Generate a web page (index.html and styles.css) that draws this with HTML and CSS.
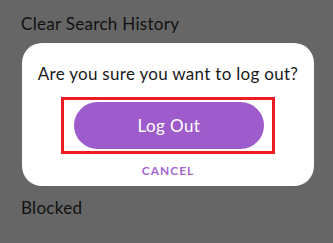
FILE: index.html
```html
<!DOCTYPE html>
<html lang="en">
<head>
  <meta charset="UTF-8" />
  <meta name="viewport" content="width=device-width, initial-scale=1.0"/>
  <title>Log Out</title>
  <link rel="stylesheet" href="styles.css">
</head>
<body>

  <div class="setting">Clear Search History</div>

  <div class="dialog">
    <p class="question">Are you sure you want to log out?</p>
    <div class="highlight">
      <button class="logout">Log Out</button>
    </div>
    <button class="cancel">CANCEL</button>
  </div>

  <div class="setting blocked">Blocked</div>

</body>
</html>
```

FILE: styles.css
```css
* {
  box-sizing: border-box;
  margin: 0;
  padding: 0;
}

body {
  font-family: Lato, "Noto Sans", sans-serif;
  background: #666;
  color: #111;
  width: 333px;
  height: 243px;
  overflow: hidden;
  letter-spacing: 0.3px;
}

.setting {
  height: 43px;
  padding: 14px 21px 0;
  font-size: 17px;
  line-height: 20px;
}

.blocked {
  padding-top: 12px;
}

.dialog {
  margin: 0 19px 0 22px;
  height: 143px;
  background: #fff;
  border-radius: 20px;
  display: flex;
  flex-direction: column;
  align-items: center;
  padding-top: 21px;
}

.question {
  font-size: 17px;
  line-height: 20px;
  color: #1a1a1a;
}

.highlight {
  margin-top: 13px;
  width: 214px;
  height: 57px;
  border: 3px solid #ed1c24;
  padding: 2px 8px 2px 10px;
}

.logout {
  display: block;
  width: 100%;
  height: 100%;
  border: none;
  border-radius: 24px;
  background: #9e5bcb;
  color: #fff;
  font-family: inherit;
  font-size: 17px;
  letter-spacing: 0.4px;
}

.cancel {
  margin-top: 10px;
  border: none;
  background: none;
  color: #a466cf;
  font-family: inherit;
  font-size: 12px;
  font-weight: bold;
  letter-spacing: 1px;
  line-height: 14px;
}
```
